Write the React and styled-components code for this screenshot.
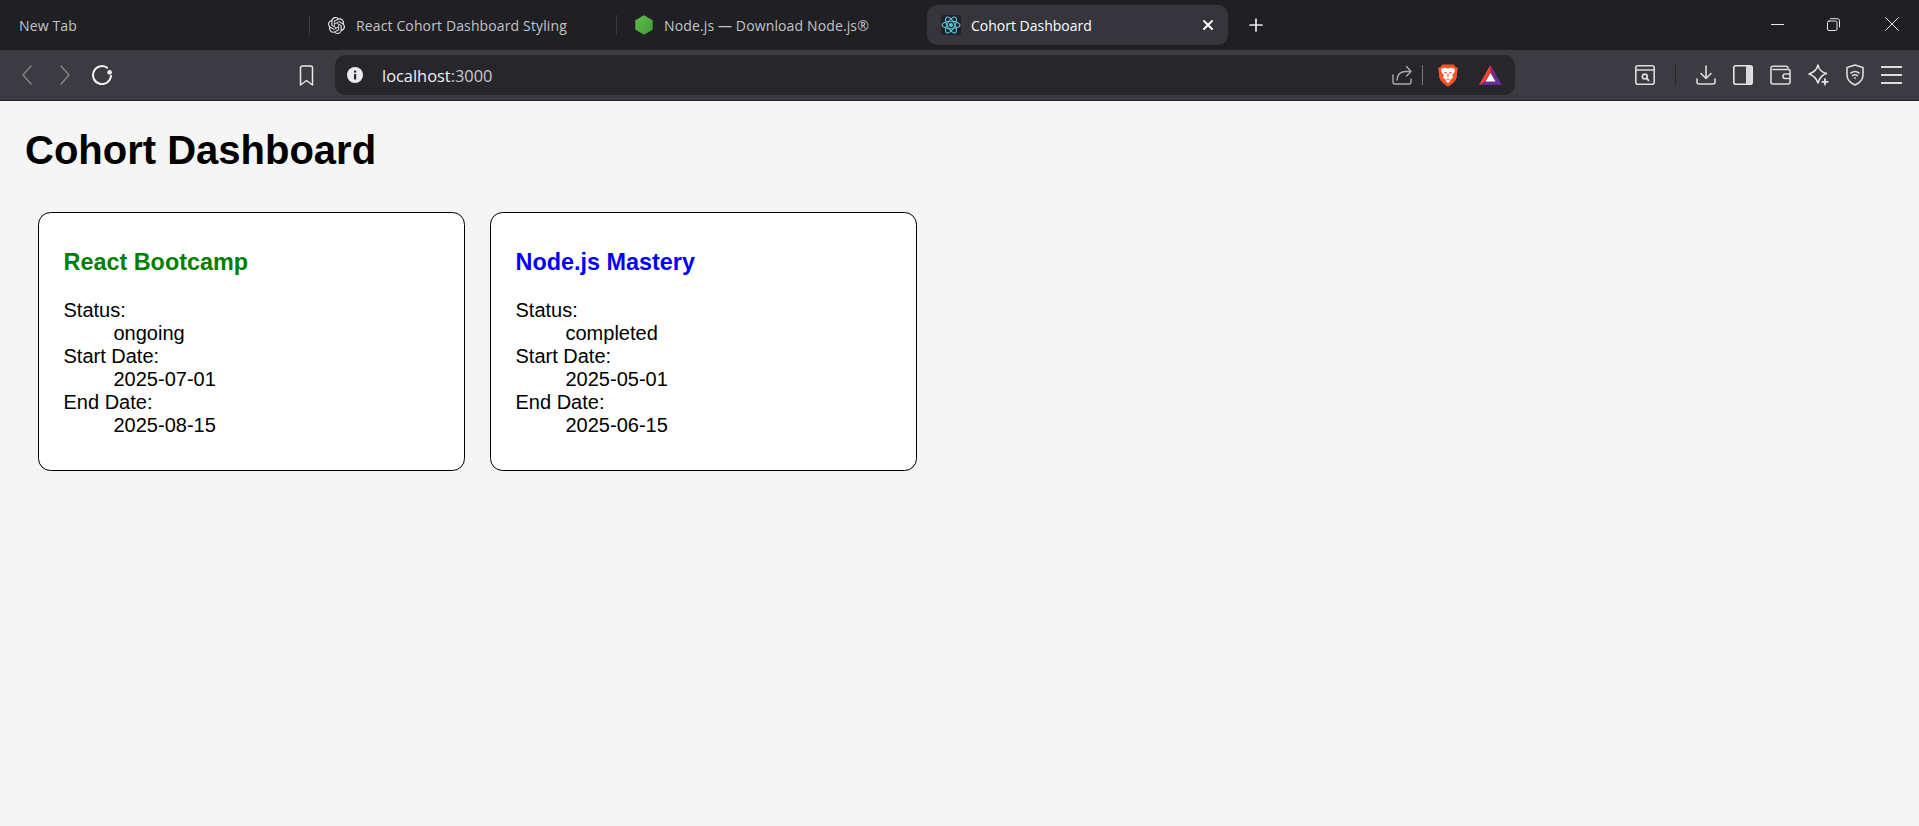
import React from "react";
import styled, { createGlobalStyle } from "styled-components";
import { SiOpenai } from "react-icons/si";

const GlobalStyle = createGlobalStyle`
  html, body {
    margin: 0;
    padding: 0;
    height: 100%;
    background-color: #f5f5f5;
  }
  #root {
    min-height: 826px;
    display: flex;
    flex-direction: column;
  }
`;

const cohorts = [
  { name: "React Bootcamp", status: "ongoing", start: "2025-07-01", end: "2025-08-15", color: "green" },
  { name: "Node.js Mastery", status: "completed", start: "2025-05-01", end: "2025-06-15", color: "blue" },
];

const UI_FONT = `"Open Sans", "Noto Sans", sans-serif`;

const TabStrip = styled.div`
  height: 50px;
  background-color: #1f1f24;
  display: flex;
  align-items: center;
  font-family: ${UI_FONT};
  font-size: 14px;
  color: #c4c4c7;
`;
const Tab = styled.div`
  width: ${(p) => p.$width}px;
  height: 40px;
  box-sizing: border-box;
  padding-left: ${(p) => p.$pad}px;
  display: flex;
  align-items: center;
  gap: ${(p) => p.$gap || 11}px;
  white-space: nowrap;
  flex-shrink: 0;
  letter-spacing: 0.13px;
`;
const ActiveTab = styled(Tab)`
  background-color: #35353b;
  border-radius: 10px;
  color: #ffffff;
  padding-right: 14px;
  letter-spacing: 0;
`;
const TabTitle = styled.span`
  flex: 1;
`;
const TabDivider = styled.div`
  width: 1px;
  height: 20px;
  background-color: #3a3a40;
  flex-shrink: 0;
`;
const NewTabButton = styled.div`
  margin-left: 21px;
  display: flex;
`;
const WindowButtons = styled.div`
  margin-left: auto;
  margin-right: 20px;
  margin-top: -2px;
  display: flex;
  align-items: center;
  gap: 43px;
  & > :last-child {
    margin-left: 2px;
  }
`;

const Toolbar = styled.div`
  height: 50px;
  background-color: #3b3b41;
  border-bottom: 1px solid #202024;
  display: flex;
  align-items: center;
  padding-left: 22px;
  padding-right: 17px;
`;
const NavButtons = styled.div`
  display: flex;
  align-items: center;
  gap: 28px;
  width: 277px;
  & > :last-child {
    margin-left: -6px;
  }
`;
const BookmarkSlot = styled.div`
  width: 36px;
  display: flex;
`;
const AddressBar = styled.div`
  width: 1180px;
  height: 40px;
  box-sizing: border-box;
  background-color: #26262b;
  border-radius: 11px;
  display: flex;
  align-items: center;
  padding: 0 13px 0 12px;
  font-family: ${UI_FONT};
  font-size: 16.4px;
  color: #ffffff;
`;
const Url = styled.span`
  margin-left: 19px;
  flex: 1;
  color: #f0f0f2;
`;
const Port = styled.span`
  color: #c9c9cd;
`;
const BarDivider = styled.div`
  width: 1px;
  height: 20px;
  background-color: ${(p) => p.$color || "#77777c"};
  margin: 0 ${(p) => p.$left ?? p.$space}px 0 ${(p) => p.$space}px;
`;
const BarIcons = styled.div`
  display: flex;
  align-items: center;
`;
const ToolIcons = styled.div`
  margin-left: auto;
  display: flex;
  align-items: center;
  gap: 17px;
`;

const Page = styled.main`
  flex: 1;
  background-color: #f5f5f5;
  padding: 26px 25px 25px;
  font-family: "Liberation Sans", Arial, sans-serif;
  font-size: 20px;
  color: #000;
`;
const Title = styled.h1`
  font-size: 40px;
  margin: 0 0 26px;
  line-height: 46px;
`;
const CardRow = styled.div`
  display: flex;
  align-items: flex-start;
`;
const Card = styled.section`
  width: 427px;
  box-sizing: border-box;
  background-color: #fff;
  border: 1px solid #000;
  border-radius: 12.5px;
  padding: 12.5px 25px;
  margin: 12.5px;
`;
const CardName = styled.h3`
  color: ${(p) => p.$color};
  font-size: 23.4px;
  line-height: 27px;
  margin: 24.4px 0 22.4px;
`;
const Details = styled.dl`
  margin: 20px 0 21px;
  line-height: 23px;
`;
const Term = styled.dt``;
const Value = styled.dd`
  margin-left: 50px;
`;

const Stroke = ({ w, h, children, color = "#d6d6d9", sw = 1.6 }) => (
  <svg width={w} height={h} viewBox={`0 0 ${w} ${h}`} fill="none" stroke={color} strokeWidth={sw} strokeLinecap="round" strokeLinejoin="round">
    {children}
  </svg>
);

const NodeIcon = () => (
  <svg width="18" height="20" viewBox="0 0 18 20">
    <defs>
      <linearGradient id="nodeGreen" x1="0" y1="0" x2="1" y2="1">
        <stop offset="0" stopColor="#66bb4a" />
        <stop offset="1" stopColor="#3c9a35" />
      </linearGradient>
    </defs>
    <path d="M9 0.3 L17.7 5.2 V14.8 L9 19.7 L0.3 14.8 V5.2 Z" fill="url(#nodeGreen)" />
  </svg>
);

const ReactIcon = () => (
  <svg width="20" height="20" viewBox="0 0 20 20">
    <rect width="20" height="20" rx="3" fill="#1f2328" />
    <g fill="none" stroke="#58c4dc" strokeWidth="1.1">
      <ellipse cx="10" cy="10" rx="9" ry="3.7" />
      <ellipse cx="10" cy="10" rx="9" ry="3.7" transform="rotate(60 10 10)" />
      <ellipse cx="10" cy="10" rx="9" ry="3.7" transform="rotate(120 10 10)" />
    </g>
    <circle cx="10" cy="10" r="2" fill="#58c4dc" />
  </svg>
);

const BraveIcon = () => (
  <svg width="20" height="23" viewBox="0 0 20 23">
    <path d="M4.5 0.5 H15.5 L17.5 2.8 L19.8 4 L18.6 14 Q17.5 17 14.5 19.5 L10 22.7 L5.5 19.5 Q2.5 17 1.4 14 L0.2 4 L2.5 2.8 Z" fill="#fb542b" />
    <path d="M10 4.6 L13 3.8 L16.6 4.8 L16.8 7.6 L14 11.4 L15 13.4 L12 16 L10 14.8 L8 16 L5 13.4 L6 11.4 L3.2 7.6 L3.4 4.8 L7 3.8 Z" fill="#fff" />
    <path d="M7.4 16.8 L10 15.8 L12.6 16.8 L10 19 Z" fill="#fff" />
    <path d="M8.6 8.4 L6.4 8.9 M11.4 8.4 L13.6 8.9 M10 9.6 V13.4" stroke="#fb542b" strokeWidth="1.1" fill="none" />
  </svg>
);

const BatIcon = () => (
  <svg width="23" height="20" viewBox="0 0 23 20">
    <path d="M11.5 0 L23 20 H0 Z" fill="#662d91" />
    <path d="M11.5 0 L11.5 7.5 L5.5 16.5 L0 20 Z" fill="#ff4724" />
    <path d="M11.5 0 L17 9.5 L11.5 7.5 Z" fill="#9e1f63" />
    <path d="M11.5 8 L16.5 16.5 H6.5 Z" fill="#ffffff" />
  </svg>
);

function App() {
  return (
    <>
      <GlobalStyle />
      <TabStrip>
        <Tab $width={309} $pad={19}>New Tab</Tab>
        <TabDivider />
        <Tab $width={306} $pad={18}>
          <SiOpenai size={17} color="#eeeeee" />
          <span>React Cohort Dashboard Styling</span>
        </Tab>
        <TabDivider />
        <Tab $width={310} $pad={18}>
          <NodeIcon />
          <span>Node.js — Download Node.js®</span>
        </Tab>
        <ActiveTab $width={301} $pad={14} $gap={10}>
          <ReactIcon />
          <TabTitle>Cohort Dashboard</TabTitle>
          <Stroke w={12} h={12} color="#fff" sw={2}>
            <path d="M2 2 L10 10 M10 2 L2 10" />
          </Stroke>
        </ActiveTab>
        <NewTabButton>
          <Stroke w={14} h={14} color="#e8e8ea" sw={1.7}>
            <path d="M7 1 V13 M1 7 H13" />
          </Stroke>
        </NewTabButton>
        <WindowButtons>
          <Stroke w={13} h={13} color="#e8e8ea" sw={1}>
            <path d="M0 6.5 H13" />
          </Stroke>
          <Stroke w={13} h={13} color="#e8e8ea" sw={1}>
            <rect x="0.5" y="3" width="9.5" height="9.5" rx="1.5" />
            <path d="M3.5 0.7 H10.5 Q12.5 0.7 12.5 2.7 V9" />
          </Stroke>
          <Stroke w={14} h={14} color="#e8e8ea" sw={1}>
            <path d="M0.7 0.7 L13.3 13.3 M13.3 0.7 L0.7 13.3" />
          </Stroke>
        </WindowButtons>
      </TabStrip>

      <Toolbar>
        <NavButtons>
          <Stroke w={10} h={20} color="#85858a" sw={1.4}>
            <path d="M9 1 L1 10 L9 19" />
          </Stroke>
          <Stroke w={10} h={20} color="#85858a" sw={1.4}>
            <path d="M1 1 L9 10 L1 19" />
          </Stroke>
          <Stroke w={21} h={20} color="#f2f2f4" sw={2}>
            <path d="M15 2.6 A9 9 0 1 0 19 11" />
            <circle cx="17.6" cy="7.4" r="2.3" fill="#f2f2f4" stroke="none" />
          </Stroke>
        </NavButtons>
        <BookmarkSlot>
          <Stroke w={15} h={21} color="#e8e8ea" sw={1.5}>
            <path d="M1.5 3 Q1.5 1 3.5 1 H11.5 Q13.5 1 13.5 3 V20 L7.5 15.5 L1.5 20 Z" />
          </Stroke>
        </BookmarkSlot>
        <AddressBar>
          <svg width="16" height="16" viewBox="0 0 16 16">
            <circle cx="8" cy="8" r="8" fill="#ececee" />
            <rect x="7" y="7" width="2.2" height="5.5" fill="#26262b" />
            <rect x="7" y="3.6" width="2.2" height="2" fill="#26262b" />
          </svg>
          <Url>localhost<Port>:3000</Port></Url>
          <BarIcons>
            <Stroke w={20} h={20} color="#a9a9ad" sw={1.4}>
              <path d="M1 10 V17 Q1 19 3 19 H17 Q19 19 19 17 V14" />
              <path d="M5 15 Q5.5 7 13 6.5 H18.5 M14.5 1.5 L19 6.5 L14.5 11" />
            </Stroke>
            <BarDivider $space={10} $left={15} />
            <BraveIcon />
            <BarDivider $space={10} $color="transparent" />
            <BatIcon />
          </BarIcons>
        </AddressBar>
        <ToolIcons>
          <Stroke w={20} h={20} color="#dcdcde">
            <rect x="0.8" y="0.8" width="18.4" height="18.4" rx="2" />
            <path d="M1 5 H19" />
            <circle cx="9.8" cy="11.5" r="2.4" strokeWidth="1.8" />
            <path d="M11.8 13.5 L13.6 15.3" strokeWidth="1.8" />
          </Stroke>
          <BarDivider $space={3} $color="#232328" />
          <Stroke w={20} h={20} color="#dcdcde">
            <path d="M10 1 V13 M5 8.5 L10 13.5 L15 8.5" />
            <path d="M1 14 V17 Q1 19 3 19 H17 Q19 19 19 17 V14" />
          </Stroke>
          <svg width="20" height="20" viewBox="0 0 20 20" fill="none">
            <rect x="13" y="1" width="6" height="18" fill="#d8d8da" />
            <rect x="0.8" y="0.8" width="18.4" height="18.4" rx="2" stroke="#e4e4e6" strokeWidth="1.6" />
          </svg>
          <Stroke w={21} h={20} color="#dcdcde">
            <path d="M3 4.5 H19 Q20 4.5 20 6 V17 Q20 19 18 19 H3 Q1 19 1 17 V3 Q1 1.2 3 1.2 H16 Q18 1.2 18 3" />
            <path d="M20 9 H15 Q13 9 13 11 Q13 13.5 15 13.5 H20" />
          </Stroke>
          <Stroke w={21} h={22} color="#e4e4e6">
            <path d="M10 1 Q11 7.5 18.5 9.5 Q12.5 11 10 19 Q7.5 12 1 10 Q8.5 7.5 10 1 Z" />
            <path d="M17 15 V20.5 M14.3 17.8 H19.7" strokeWidth="1.8" />
          </Stroke>
          <Stroke w={18} h={22} color="#dcdcde">
            <path d="M9 1 L17 3.5 V11 Q17 17.5 9 21 Q1 17.5 1 11 V3.5 Z" />
            <path d="M5 9 Q9 6 13 9 M6.5 11.6 Q9 9.8 11.5 11.6" />
            <circle cx="9" cy="14" r="0.9" fill="#dcdcde" stroke="none" />
          </Stroke>
          <Stroke w={21} h={20} color="#dcdcde" sw={1.8}>
            <path d="M0 2 H21 M0 10 H21 M0 18 H21" />
          </Stroke>
        </ToolIcons>
      </Toolbar>

      <Page>
        <Title>Cohort Dashboard</Title>
        <CardRow>
          {cohorts.map((cohort) => (
            <Card key={cohort.name}>
              <CardName $color={cohort.color}>{cohort.name}</CardName>
              <Details>
                <Term>Status:</Term>
                <Value>{cohort.status}</Value>
                <Term>Start Date:</Term>
                <Value>{cohort.start}</Value>
                <Term>End Date:</Term>
                <Value>{cohort.end}</Value>
              </Details>
            </Card>
          ))}
        </CardRow>
      </Page>
    </>
  );
}

export default App;
